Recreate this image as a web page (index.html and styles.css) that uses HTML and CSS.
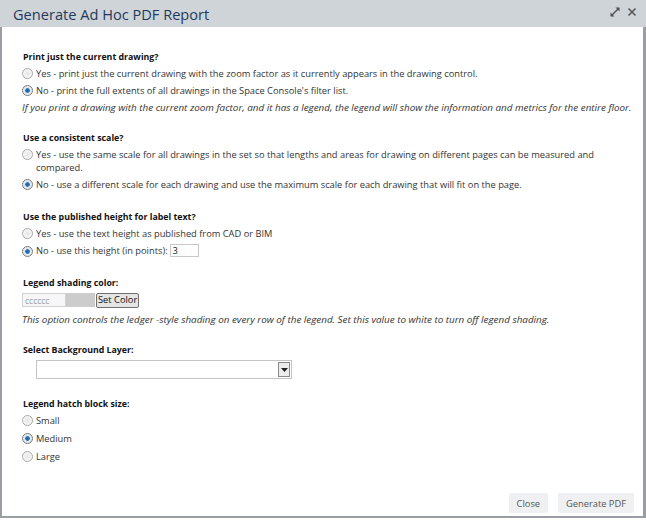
FILE: index.html
```html
<!DOCTYPE html>
<html lang="en">
<head>
    <meta charset="UTF-8">
    <title>Generate Ad Hoc PDF Report</title>
    <link rel="stylesheet" href="styles.css">
</head>
<body>
    <div class="dialog">
        <div class="dialog-header">
            <span class="dialog-title">Generate Ad Hoc PDF Report</span>
            <span class="header-tools">
                <svg width="10" height="10" viewBox="0 0 10 10" class="tool-icon">
                    <path d="M1 9 L9 1" stroke="#555" stroke-width="1.4"/>
                    <path d="M0.5 9.5 L0.5 5.5 L4.5 9.5 Z" fill="#555"/>
                    <path d="M9.5 0.5 L9.5 4.5 L5.5 0.5 Z" fill="#555"/>
                </svg>
                <svg width="10" height="10" viewBox="0 0 10 10" class="tool-icon">
                    <path d="M1.5 1.5 L8.5 8.5 M8.5 1.5 L1.5 8.5" stroke="#555" stroke-width="1.5"/>
                </svg>
            </span>
        </div>

        <div class="dialog-body">
            <div class="section">
                <div class="section-title">Print just the current drawing?</div>
                <label class="row"><input type="radio" name="extent"><span>Yes - print just the current drawing with the zoom factor as it currently appears in the drawing control.</span></label>
                <label class="row"><input type="radio" name="extent" checked><span>No - print the full extents of all drawings in the Space Console's filter list.</span></label>
                <div class="note">If you print a drawing with the current zoom factor, and it has a legend, the legend will show the information and metrics for the entire floor.</div>
            </div>

            <div class="section section-scale">
                <div class="section-title">Use a consistent scale?</div>
                <label class="row"><input type="radio" name="scale"><span>Yes - use the same scale for all drawings in the set so that lengths and areas for drawing on different pages can be measured and compared.</span></label>
                <label class="row"><input type="radio" name="scale" checked><span>No - use a different scale for each drawing and use the maximum scale for each drawing that will fit on the page.</span></label>
            </div>

            <div class="section">
                <div class="section-title">Use the published height for label text?</div>
                <label class="row"><input type="radio" name="height"><span>Yes - use the text height as published from CAD or BIM</span></label>
                <label class="row row-input"><input type="radio" name="height" checked><span>No - use this height (in points):</span><input type="text" class="points-input" value="3"></label>
            </div>

            <div class="section">
                <div class="section-title">Legend shading color:</div>
                <div class="color-row">
                    <input type="text" class="color-input" value="cccccc">
                    <span class="color-swatch"></span>
                    <button class="set-color">Set Color</button>
                </div>
                <div class="note note-spaced">This option controls the ledger -style shading on every row of the legend. Set this value to white to turn off legend shading.</div>
            </div>

            <div class="section section-layer">
                <div class="section-title">Select Background Layer:</div>
                <div class="select-box">
                    <span class="select-arrow">
                        <svg width="7" height="4" viewBox="0 0 7 4"><path d="M0 0 L7 0 L3.5 4 Z" fill="#222"/></svg>
                    </span>
                </div>
            </div>

            <div class="section section-hatch">
                <div class="section-title">Legend hatch block size:</div>
                <label class="row row-tall"><input type="radio" name="hatch"><span>Small</span></label>
                <label class="row row-tall"><input type="radio" name="hatch" checked><span>Medium</span></label>
                <label class="row row-tall"><input type="radio" name="hatch"><span>Large</span></label>
            </div>
        </div>

        <div class="dialog-footer">
            <button class="footer-btn">Close</button>
            <button class="footer-btn">Generate PDF</button>
        </div>
    </div>
</body>
</html>
```

FILE: styles.css
```css
html, body {
    margin: 0;
    padding: 0;
    height: 100%;
    background-color: #fff;
}
body {
    font-family: "Open Sans", "DejaVu Sans", sans-serif;
    font-size: 9.3px;
    color: #333;
}
.dialog {
    height: 518px;
    width: 646px;
    box-sizing: border-box;
    border-left: 2px solid #9a9ea2;
    border-right: 3px solid #9a9ea2;
    border-bottom: 2px solid #9a9ea2;
    display: flex;
    flex-direction: column;
}
.dialog-header {
    flex: none;
    height: 27px;
    margin-left: -2px;
    margin-right: -3px;
    background-color: #cfd4d8;
    display: flex;
    align-items: center;
    justify-content: space-between;
    padding: 0 9px 0 13px;
}
.dialog-title {
    font-size: 14.6px;
    color: #1f3a5c;
    margin-top: 1px;
}
.header-tools {
    display: flex;
    gap: 7px;
    align-items: center;
    margin-top: -4px;
}
.dialog-body {
    flex: 1;
    padding: 22px 10px 0 20px;
}
.section {
    margin-bottom: 14px;
}
.section-scale {
    margin-bottom: 16px;
}
.section-title {
    font-weight: bold;
    font-size: 8.8px;
    color: #111;
    line-height: 16px;
    height: 16px;
    padding-left: 1px;
}
.row {
    display: flex;
    align-items: flex-start;
    padding: 2px 0;
    line-height: 13px;
}
.row span {
    flex: 1;
}
.row-input span {
    flex: none;
}
.row-input {
    padding: 2px 0 4px;
    align-items: center;
}
.row-tall {
    padding: 2px 0 3px;
}
input[type="radio"] {
    -webkit-appearance: none;
    appearance: none;
    width: 11px;
    height: 11px;
    margin: 1px 3px 0 0;
    flex: none;
    border: 1px solid #a9a9a9;
    border-radius: 50%;
    background: radial-gradient(circle, #e6e6e6 0%, #f6f6f6 70%);
    box-sizing: border-box;
}
input[type="radio"]:checked {
    border-color: #7a7a7a;
    background: radial-gradient(circle, #1d5f9e 0, #2c79c2 2px, #dfe6ee 2.6px, #f2f2f2 100%);
}
.points-input {
    width: 29px;
    height: 13px;
    margin-left: 2px;
    border: 1px solid #c8c8c8;
    padding: 0 2px;
    font-family: inherit;
    font-size: 9.3px;
    color: #222;
    box-sizing: border-box;
}
.note {
    font-style: italic;
    font-size: 9.85px;
    line-height: 17px;
}
.note-spaced {
    margin-top: 2px;
}
.color-row {
    display: flex;
    align-items: center;
    height: 18px;
}
.color-input {
    width: 44px;
    height: 14px;
    box-sizing: border-box;
    border: 1px solid #d2d2d2;
    background-color: #f7f7f7;
    color: #9a9a9a;
    font-family: inherit;
    font-size: 8.5px;
    padding: 0 2px;
}
.color-swatch {
    width: 29px;
    height: 14px;
    background-color: #cccccc;
}
.set-color {
    height: 15px;
    margin-left: 1px;
    padding: 0 1px;
    border: 1px solid #707070;
    border-radius: 2px;
    background-color: #e5e5e5;
    font-family: inherit;
    font-size: 9.3px;
    color: #111;
    line-height: 12px;
}
.section-layer {
    margin-bottom: 17px;
}
.select-box {
    margin: 2px 0 0 14px;
    width: 256px;
    height: 19px;
    box-sizing: border-box;
    border: 1px solid #c4c4c4;
    display: flex;
    justify-content: flex-end;
    align-items: center;
    padding-right: 1px;
}
.select-arrow {
    width: 12px;
    height: 15px;
    border: 1px solid #8a8a8a;
    background-color: #ececec;
    display: flex;
    align-items: center;
    justify-content: center;
    box-sizing: border-box;
}
.dialog-footer {
    flex: none;
    display: flex;
    justify-content: flex-end;
    gap: 10px;
    padding: 0 9px 3px 0;
}
.footer-btn {
    height: 20px;
    padding: 0 8px;
    border: none;
    border-radius: 2px;
    background-color: #eef0f2;
    color: #555;
    font-family: inherit;
    font-size: 9.3px;
}
```
